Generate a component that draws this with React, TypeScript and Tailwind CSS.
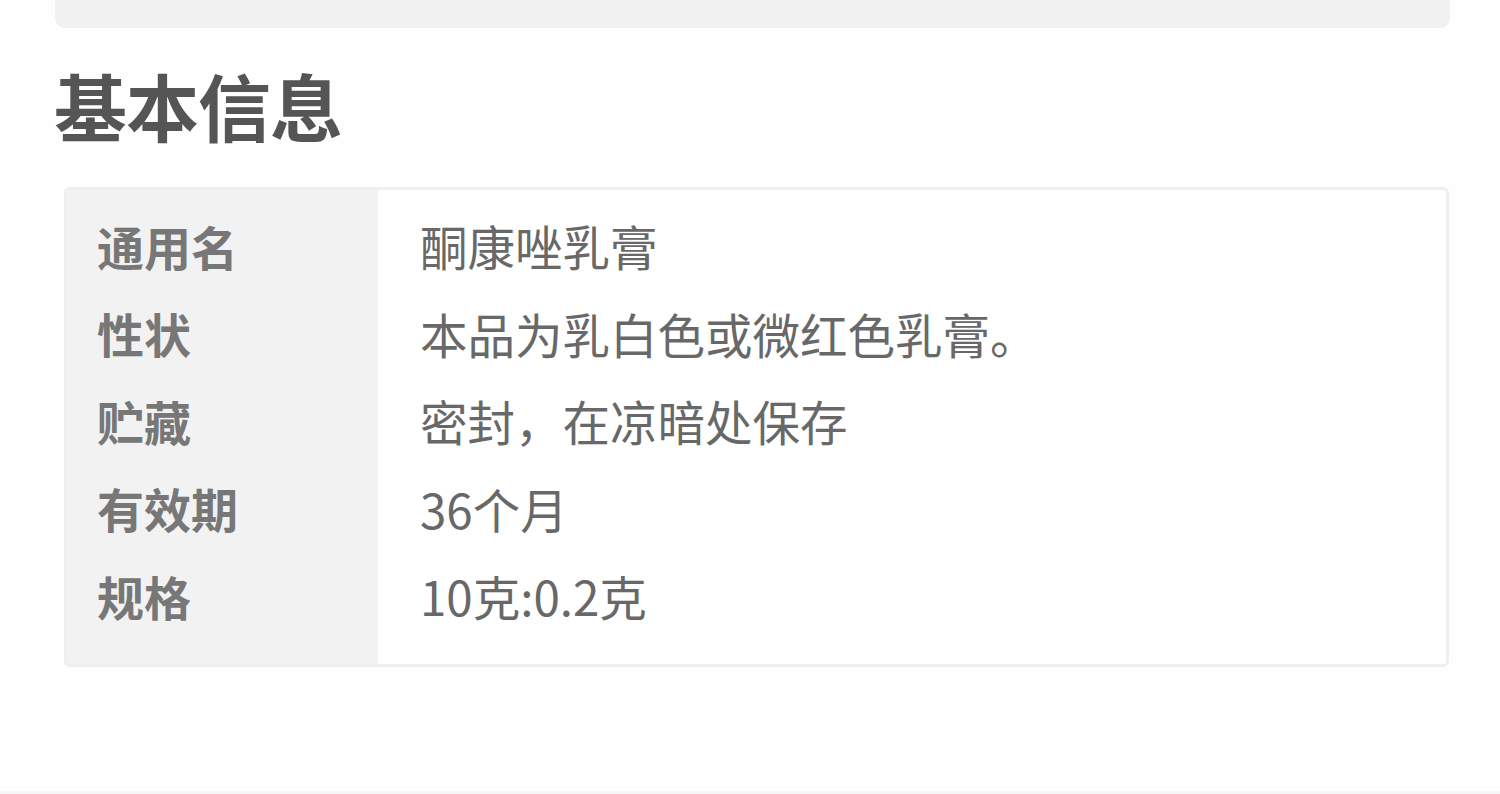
const rows = [
  { label: "通用名", value: "酮康唑乳膏" },
  { label: "性状", value: "本品为乳白色或微红色乳膏。" },
  { label: "贮藏", value: "密封，在凉暗处保存" },
  { label: "有效期", value: "36个月" },
  { label: "规格", value: "10克:0.2克" },
];

export default function App() {
  return (
    <div
      className="h-[794px] w-[1500px] overflow-hidden bg-[#fefefe] flex flex-col"
      style={{ fontFamily: '"Noto Sans CJK SC", "Noto Sans", sans-serif' }}
    >
      {/* top card remnant */}
      <div className="ml-[55px] mr-[50px] h-[28px] rounded-b-[10px] bg-[#f1f1f1] shrink-0" />

      {/* heading */}
      <h1 className="ml-[54px] mt-[26px] text-[73px] leading-[100px] font-bold text-[#555555] tracking-[-1px]">
        基本信息
      </h1>

      {/* info table */}
      <div className="ml-[64px] mr-[51px] mt-[33px] flex rounded-[6px] border-[3px] border-[#efefef] bg-white overflow-hidden">
        <div className="w-[311px] shrink-0 bg-[#f2f2f2] pl-[30px] pt-[12px] pb-[24px] flex flex-col">
          {rows.map((r) => (
            <div
              key={r.label}
              className="h-[87.5px] flex items-center text-[47px] font-bold text-[#777777]"
            >
              {r.label}
            </div>
          ))}
        </div>
        <div className="flex-1 pl-[42px] pt-[12px] pb-[24px] flex flex-col">
          {rows.map((r) => (
            <div
              key={r.label}
              className="h-[87.5px] flex items-center text-[47.5px] text-[#686868]"
            >
              {r.value}
            </div>
          ))}
        </div>
      </div>

      <div className="flex-1" />
      <div className="h-[3px] bg-[#f5f6f8] shrink-0" />
    </div>
  );
}
